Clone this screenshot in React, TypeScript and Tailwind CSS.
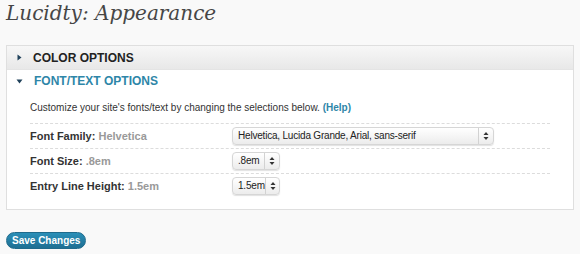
import type { ReactNode } from 'react'

const SANS = 'font-["Liberation_Sans",Arial,sans-serif]'

function Arrows() {
  return (
    <svg width="6" height="10" viewBox="0 0 6 10" className="shrink-0">
      <path d="M3 1 L5.5 4 L0.5 4 Z" fill="#333" />
      <path d="M3 9 L5.5 6 L0.5 6 Z" fill="#333" />
    </svg>
  )
}

function FakeSelect({ value, width }: { value: string; width: string }) {
  return (
    <div
      className={`flex h-[18px] items-stretch rounded-[4px] border border-[#d6d6d6] bg-gradient-to-b from-white to-[#ececec] shadow-[0_1px_1px_rgba(0,0,0,0.12)] ${width}`}
    >
      <span className="flex-1 whitespace-nowrap pl-[5px] text-[10px] leading-[16px] tracking-[-0.2px] text-[#222]">{value}</span>
      <span className="flex w-[15px] shrink-0 items-center justify-center border-l border-[#d2d2d2]">
        <Arrows />
      </span>
    </div>
  )
}

function Row({ label, current, children }: { label: string; current: string; children: ReactNode }) {
  return (
    <div className="flex h-[25px] items-center border-t border-dashed border-[#dcdcdc]">
      <div className="w-[202px] text-[11px] font-bold text-[#333]">
        {label} <span className="text-[#999]">{current}</span>
      </div>
      {children}
    </div>
  )
}

export default function App() {
  return (
    <div className={`h-[254px] w-[580px] bg-[#f9f9f9] ${SANS}`}>
      <h1 className='pl-[6px] pt-[1px] font-["DejaVu_Serif",Georgia,serif] text-[20px] italic leading-[25px] text-[#464646]'>
        Lucidty: Appearance
      </h1>

      {/* Options panel */}
      <div className="ml-[6px] mt-[19px] w-[568px] border border-[#dfdfdf] bg-white">
        <div className="flex h-[24px] items-center gap-[8px] border-b border-[#e4e4e4] bg-gradient-to-b from-[#f7f7f7] to-[#e8e8e8] pl-[10px]">
          <svg width="5" height="7" viewBox="0 0 5 7">
            <path d="M0.5 0.5 L4.5 3.5 L0.5 6.5 Z" fill="#21425b" />
          </svg>
          <span className="pl-[3px] text-[12px] font-bold text-[#222]">COLOR OPTIONS</span>
        </div>
        <div className="flex h-[22px] items-center gap-[8px] pl-[9px]">
          <svg width="7" height="5" viewBox="0 0 7 5">
            <path d="M0.5 0.5 L6.5 0.5 L3.5 4.5 Z" fill="#21425b" />
          </svg>
          <span className="pl-[3px] text-[12px] font-bold text-[#2e86a8]">FONT/TEXT OPTIONS</span>
        </div>

        <div className="pb-[11px] pl-[23px] pr-[23px]">
          <p className="pb-[8px] pt-[8px] text-[10px] text-[#333]">
            Customize your site's fonts/text by changing the selections below.{' '}
            <span className="font-bold text-[#2e86a8]">(Help)</span>
          </p>
          <Row label="Font Family:" current="Helvetica">
            <FakeSelect value="Helvetica, Lucida Grande, Arial, sans-serif" width="w-[262px]" />
          </Row>
          <Row label="Font Size:" current=".8em">
            <FakeSelect value=".8em" width="w-[48px]" />
          </Row>
          <Row label="Entry Line Height:" current="1.5em">
            <FakeSelect value="1.5em" width="w-[48px]" />
          </Row>
        </div>
      </div>

      <div className="pl-[6px] pt-[17px]">
        <button className="h-[17px] rounded-full border border-[#1f6b8c] bg-gradient-to-b from-[#2a8fb8] to-[#1f6f92] px-[5px] text-[10px] font-bold leading-[15px] text-white">
          Save Changes
        </button>
      </div>
    </div>
  )
}
